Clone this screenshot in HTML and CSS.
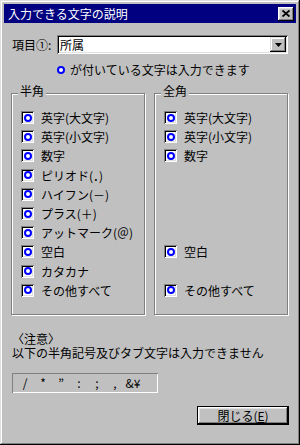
FILE: index.html
```html
<!DOCTYPE html>
<html lang="ja">
<head>
    <meta charset="UTF-8">
    <meta name="viewport" content="width=device-width, initial-scale=1.0">
    <title>入力できる文字の説明</title>
    <link rel="stylesheet" href="styles.css">
</head>
<body>

    <div class="window">
        <!-- タイトルバー -->
        <div class="titlebar">
            <span class="title">入力できる文字の説明</span>
            <span class="close">
                <svg width="8" height="7" viewBox="0 0 8 7">
                    <path d="M0.5 0.5 L7.5 6.5 M7.5 0.5 L0.5 6.5" stroke="#000" stroke-width="1.8" fill="none"/>
                </svg>
            </span>
        </div>

        <div class="content">
            <div class="field-row">
                <span class="field-label">項目①:</span>
                <div class="combo">
                    <span class="combo-value">所属</span>
                    <span class="combo-btn">
                        <svg width="7" height="4" viewBox="0 0 7 4">
                            <path d="M0 0 H7 L3.5 4 Z" fill="#000"/>
                        </svg>
                    </span>
                </div>
            </div>

            <p class="note"><span class="ring"></span>が付いている文字は入力できます</p>

            <div class="groups">
                <fieldset class="group">
                    <legend>半角</legend>
                    <ul class="items">
                        <li><span class="check"><span class="ring"></span></span>英字(大文字)</li>
                        <li><span class="check"><span class="ring"></span></span>英字(小文字)</li>
                        <li><span class="check"><span class="ring"></span></span>数字</li>
                        <li><span class="check"><span class="ring"></span></span>ピリオド(．)</li>
                        <li><span class="check"><span class="ring"></span></span>ハイフン(－)</li>
                        <li><span class="check"><span class="ring"></span></span>プラス(＋)</li>
                        <li><span class="check"><span class="ring"></span></span>アットマーク(＠)</li>
                        <li><span class="check"><span class="ring"></span></span>空白</li>
                        <li><span class="check"><span class="ring"></span></span>カタカナ</li>
                        <li><span class="check"><span class="ring"></span></span>その他すべて</li>
                    </ul>
                </fieldset>

                <fieldset class="group">
                    <legend>全角</legend>
                    <ul class="items">
                        <li><span class="check"><span class="ring"></span></span>英字(大文字)</li>
                        <li><span class="check"><span class="ring"></span></span>英字(小文字)</li>
                        <li><span class="check"><span class="ring"></span></span>数字</li>
                        <li></li>
                        <li></li>
                        <li></li>
                        <li></li>
                        <li><span class="check"><span class="ring"></span></span>空白</li>
                        <li></li>
                        <li><span class="check"><span class="ring"></span></span>その他すべて</li>
                    </ul>
                </fieldset>
            </div>

            <div class="notice">
                <p>〈注意〉</p>
                <p>以下の半角記号及びタブ文字は入力できません</p>
            </div>

            <div class="symbols">
                <span>/</span>
                <span>*</span>
                <span>”</span>
                <span>:</span>
                <span>;</span>
                <span>,</span>
                <span>&amp;¥</span>
            </div>

            <div class="actions">
                <button class="btn">閉じる(<u>E</u>)</button>
            </div>
        </div>
    </div>

</body>
</html>
```

FILE: styles.css
```css
body {
    margin: 0;
    font-family: "Noto Sans CJK JP", "Liberation Sans", sans-serif;
    font-size: 12px;
    color: #000;
}

/* ウィンドウ枠 */
.window {
    width: 300px;
    height: 445px;
    box-sizing: border-box;
    padding: 4px;
    background: #c0c0c0;
    display: flex;
    flex-direction: column;
    box-shadow: inset -1px -1px #000, inset 1px 1px #dfdfdf,
                inset -2px -2px #808080, inset 2px 2px #fff;
}

.titlebar {
    height: 19px;
    background: #000080;
    color: #fff;
    display: flex;
    align-items: center;
    justify-content: space-between;
    padding: 0 2px 0 4px;
}

.title {
    line-height: 19px;
}

.close {
    width: 16px;
    height: 14px;
    background: #c0c0c0;
    display: flex;
    align-items: center;
    justify-content: center;
    box-shadow: inset -1px -1px #000, inset 1px 1px #fff,
                inset -2px -2px #808080, inset 2px 2px #dfdfdf;
}

.content {
    flex: 1;
    padding: 12px 8px 0 8px;
    display: flex;
    flex-direction: column;
}

/* 項目コンボボックス */
.field-row {
    display: flex;
    align-items: center;
    height: 19px;
}

.field-label {
    width: 45px;
}

.combo {
    flex: 1;
    height: 19px;
    box-sizing: border-box;
    padding: 2px 2px 2px 3px;
    background: #fff;
    display: flex;
    align-items: center;
    box-shadow: inset 1px 1px #808080, inset -1px -1px #fff,
                inset 2px 2px #000, inset -2px -2px #dfdfdf;
}

.combo-btn {
    margin-left: auto;
    width: 16px;
    height: 15px;
    background: #c0c0c0;
    display: flex;
    align-items: center;
    justify-content: center;
    box-shadow: inset -1px -1px #000, inset 1px 1px #dfdfdf,
                inset -2px -2px #808080, inset 2px 2px #fff;
}

.note {
    margin: 9px 0 0 45px;
    height: 14px;
    line-height: 14px;
    display: flex;
    align-items: center;
    gap: 5px;
}

/* 青い丸 */
.ring {
    width: 8px;
    height: 8px;
    box-sizing: border-box;
    border: 2px solid #0000ff;
    border-radius: 50%;
    background: #fff;
}

/* グループ枠 */
.groups {
    margin: 8px 0 0 -1px;
    display: flex;
    gap: 9px;
}

.group {
    flex: 1;
    margin: 0;
    padding: 0;
    border: 1px solid #808080;
    box-shadow: inset 1px 1px #fff, 1px 1px #fff;
}

.group legend {
    margin-left: 6px;
    padding: 0 2px 4px;
    line-height: 12px;
    background: #c0c0c0;
}

.items {
    list-style: none;
    margin: 0;
    padding: 7px 0 14px 9px;
}

.items li {
    height: 19.2px;
    display: flex;
    align-items: center;
    gap: 7px;
    white-space: nowrap;
}

.check {
    width: 13px;
    height: 13px;
    box-sizing: border-box;
    background: #fff;
    display: flex;
    align-items: center;
    justify-content: center;
    box-shadow: inset 1px 1px #808080, inset -1px -1px #fff,
                inset 2px 2px #000, inset -2px -2px #dfdfdf;
}

/* 注意書き (行間が詰まっているので欧文フォントを先頭に) */
.notice {
    margin-top: 18px;
    font-family: "Liberation Sans", "Noto Sans CJK JP", sans-serif;
}

.notice p {
    margin: 0;
    line-height: 14px;
}

.symbols {
    margin-top: 12px;
    width: 146px;
    height: 20px;
    box-sizing: border-box;
    padding-left: 4px;
    display: flex;
    align-items: center;
    box-shadow: inset 1px 1px #808080, inset -1px -1px #fff;
}

.symbols span {
    width: 18px;
    text-align: center;
}

.actions {
    margin-top: 13px;
    display: flex;
    justify-content: flex-end;
    margin-right: -1px;
}

.btn {
    width: 92px;
    height: 19px;
    padding: 0;
    font-family: inherit;
    font-size: 12px;
    color: #000;
    background: #c0c0c0;
    border: 1px solid #000;
    box-shadow: inset -1px -1px #000, inset 1px 1px #fff,
                inset -2px -2px #808080, inset 2px 2px #dfdfdf;
}
```
